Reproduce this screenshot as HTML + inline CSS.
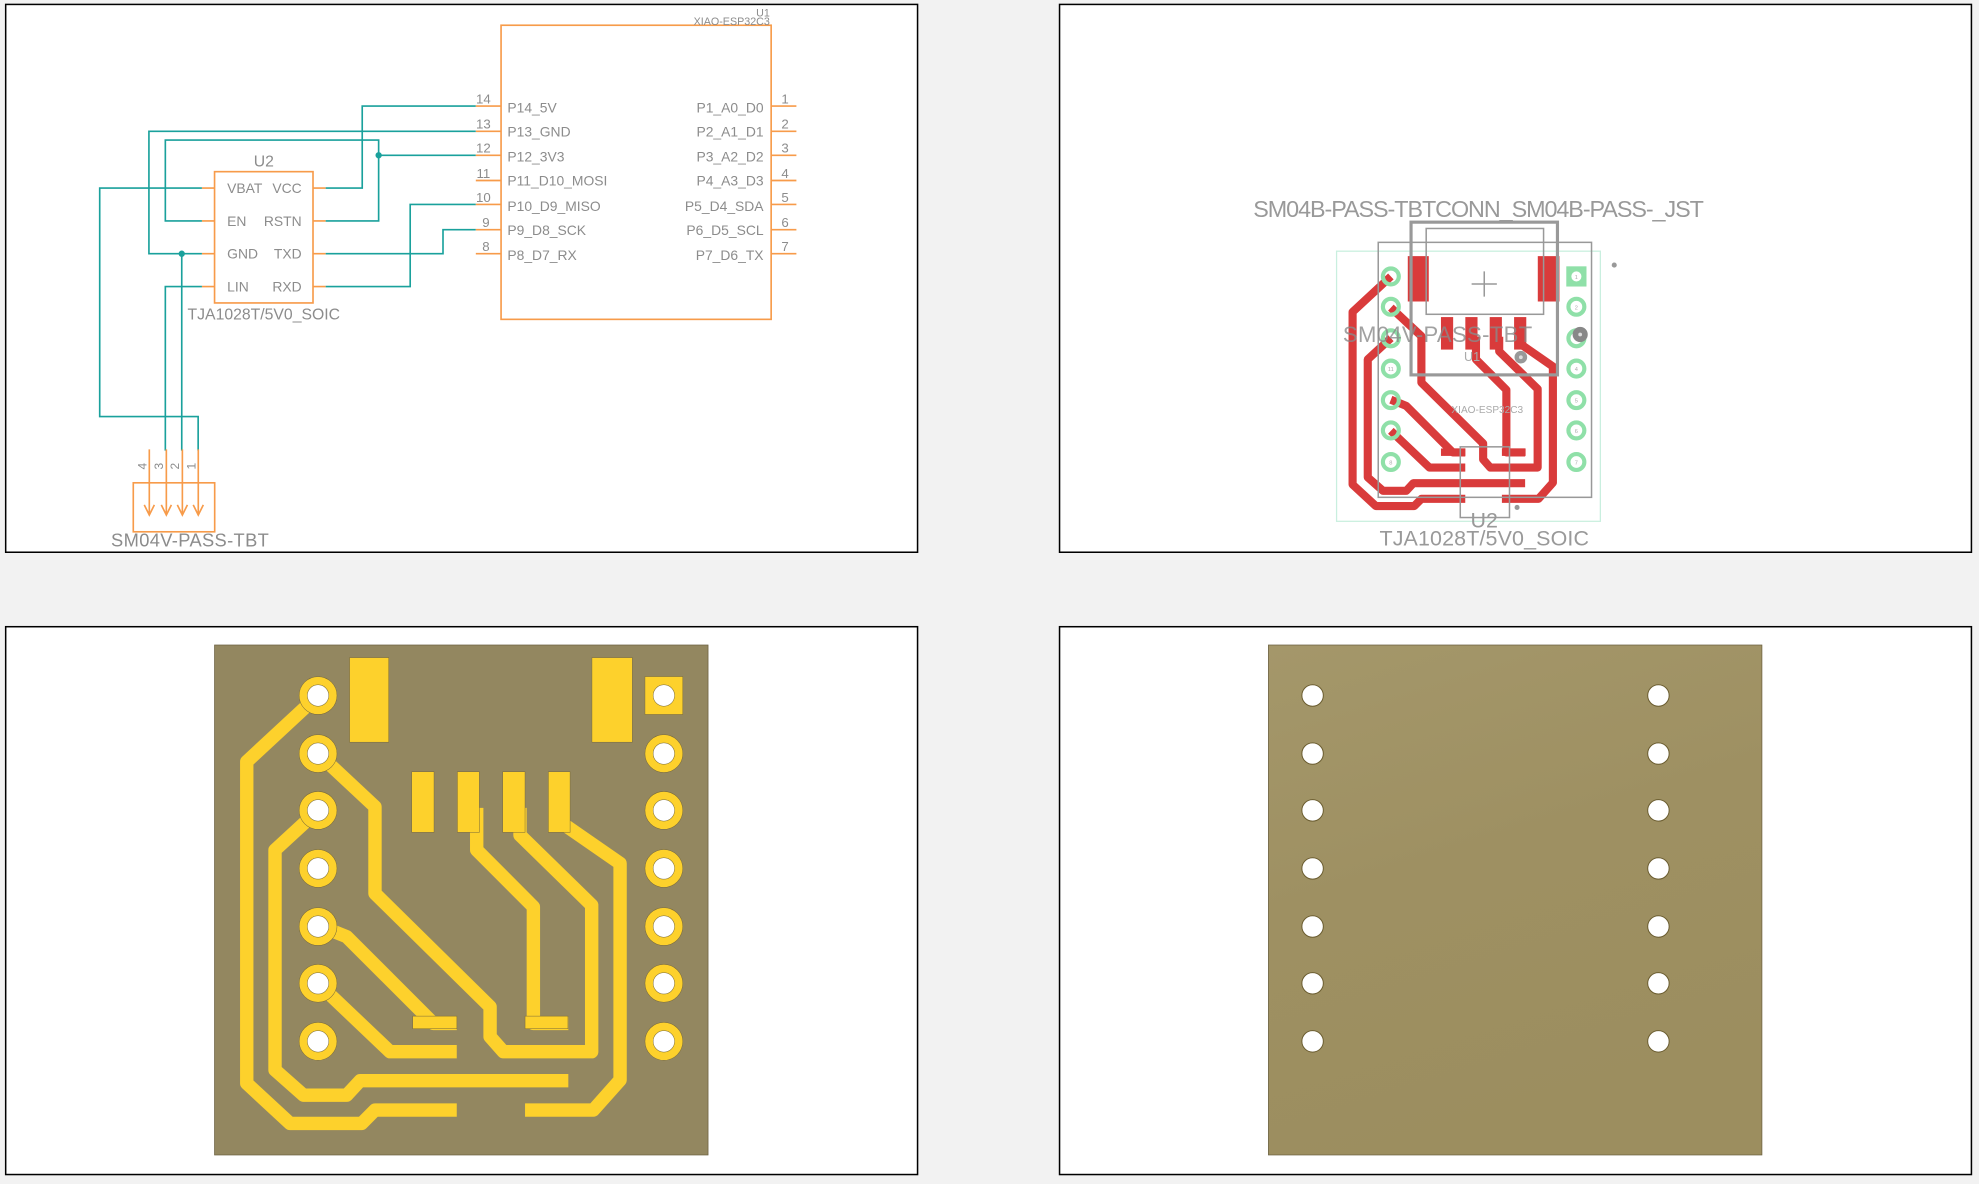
<!DOCTYPE html>
<html><head><meta charset="utf-8"><style>
html,body{margin:0;padding:0;background:#f2f2f2;}
svg{display:block;}
text{font-family:"Liberation Sans",sans-serif;}
</style></head><body>
<svg width="1979" height="1184" viewBox="0 0 1568 938" preserveAspectRatio="none" xmlns="http://www.w3.org/2000/svg">
<defs>
<linearGradient id="bg2" x1="0" y1="0" x2="0.3" y2="1">
<stop offset="0" stop-color="#a4976a"/><stop offset="0.5" stop-color="#9e9062"/><stop offset="1" stop-color="#9c8e5f"/>
</linearGradient>
<g id="traces" fill="none" stroke-linejoin="round" stroke-linecap="butt">
<path d="M252,551 L195.5,603.4 L195.5,858.3 L229.8,890 L286.6,890 L297.1,879.4 L361.9,879.4"/>
<path d="M252,597 L297.1,639.1 L297.1,707.8 L388.3,797.6 L388.3,821.3 L398.8,833.2 L468.8,833.2 L468.8,717.1 L412,661.6 L412,640"/>
<path d="M252,642 L217.9,673.4 L217.9,847.7 L240.4,867.6 L274.7,867.6 L285.3,856.2 L450.3,856.2"/>
<path d="M252,733 L274.7,742.1 L343.4,810.8 L361.9,810.8"/>
<path d="M252,779 L309,833.2 L361.9,833.2"/>
<path d="M377.7,640 L377.7,673.4 L422.6,718.4 L422.6,810.8 L450.3,810.8"/>
<path d="M443.7,651 L491.3,684 L491.3,855.6 L470.1,879.4 L416,879.4"/>
</g>
</defs>
<rect width="1568" height="938" fill="#f2f2f2"/>
<rect x="4.5" y="3.5" width="722.5" height="434" fill="#fff" stroke="#000" stroke-width="1.2"/>
<rect x="839.5" y="3.5" width="722.5" height="434" fill="#fff" stroke="#000" stroke-width="1.2"/>
<rect x="4.5" y="496.5" width="722.5" height="434" fill="#fff" stroke="#000" stroke-width="1.2"/>
<rect x="839.5" y="496.5" width="722.5" height="434" fill="#fff" stroke="#000" stroke-width="1.2"/>

<g fill="none" stroke="#1aa19c" stroke-width="1.3">
<path d="M258,149 H287 V84 H377"/>
<path d="M377,104 H118 V201 H160"/>
<path d="M377,123 H300 V111 H131 V175 H160"/>
<path d="M300,123 V175 H258"/>
<path d="M258,201 H351 V182 H377"/>
<path d="M258,227 H325 V162 H377"/>
<path d="M160,149 H79 V330 H157 V357"/>
<path d="M144,201 V357"/>
<path d="M160,227 H131 V357"/>
</g>
<circle cx="300" cy="123" r="2.5" fill="#1aa19c"/>
<circle cx="144" cy="201" r="2.5" fill="#1aa19c"/>
<g fill="none" stroke="#f79b4a" stroke-width="1.3">
<rect x="397" y="20" width="214" height="233"/>
<rect x="170" y="136" width="78" height="104"/>
<path d="M377,84H397M377,104H397M377,123H397M377,143H397M377,162H397M377,182H397M377,201H397"/>
<path d="M611,84H631M611,104H631M611,123H631M611,143H631M611,162H631M611,182H631M611,201H631"/>
<path d="M160,149H170M160,175H170M160,201H170M160,227H170M248,149H258M248,175H258M248,201H258M248,227H258"/>
<rect x="105.6" y="382.5" width="64.5" height="38.8"/>
<path d="M118.3,356V408M131.8,356V408M144.5,356V408M157.1,356V408"/>
<path d="M114.3,400L118.3,408L122.3,400M127.8,400L131.8,408L135.8,400M140.5,400L144.5,408L148.5,400M153.1,400L157.1,408L161.1,400"/>
</g>
<g fill="#8c8c8c" font-size="10.5">
<text x="383" y="82" text-anchor="middle">14</text><text x="383" y="102" text-anchor="middle">13</text><text x="383" y="121" text-anchor="middle">12</text><text x="383" y="141" text-anchor="middle">11</text><text x="383" y="160" text-anchor="middle">10</text><text x="385" y="180" text-anchor="middle">9</text><text x="385" y="199" text-anchor="middle">8</text>
<text x="622" y="82" text-anchor="middle">1</text><text x="622" y="102" text-anchor="middle">2</text><text x="622" y="121" text-anchor="middle">3</text><text x="622" y="141" text-anchor="middle">4</text><text x="622" y="160" text-anchor="middle">5</text><text x="622" y="180" text-anchor="middle">6</text><text x="622" y="199" text-anchor="middle">7</text>
</g>
<g fill="#8c8c8c" font-size="11">
<text x="402" y="89">P14_5V</text><text x="402" y="108">P13_GND</text><text x="402" y="128">P12_3V3</text><text x="402" y="147">P11_D10_MOSI</text><text x="402" y="167">P10_D9_MISO</text><text x="402" y="186">P9_D8_SCK</text><text x="402" y="206">P8_D7_RX</text>
<g text-anchor="end"><text x="605" y="89">P1_A0_D0</text><text x="605" y="108">P2_A1_D1</text><text x="605" y="128">P3_A2_D2</text><text x="605" y="147">P4_A3_D3</text><text x="605" y="167">P5_D4_SDA</text><text x="605" y="186">P6_D5_SCL</text><text x="605" y="206">P7_D6_TX</text></g>
<text x="180" y="153">VBAT</text><text x="180" y="179">EN</text><text x="180" y="205">GND</text><text x="180" y="231">LIN</text>
<g text-anchor="end"><text x="239" y="153">VCC</text><text x="239" y="179">RSTN</text><text x="239" y="205">TXD</text><text x="239" y="231">RXD</text></g>
</g>
<text x="209" y="132" fill="#8c8c8c" font-size="12.5" text-anchor="middle">U2</text>
<text x="209" y="253" fill="#8c8c8c" font-size="12.5" text-anchor="middle">TJA1028T/5V0_SOIC</text>
<text x="610" y="13" fill="#8c8c8c" font-size="8.5" text-anchor="end">U1</text>
<text x="610" y="20" fill="#8c8c8c" font-size="8.5" text-anchor="end">XIAO-ESP32C3</text>
<text x="88" y="433" fill="#8c8c8c" font-size="14.5" textLength="125">SM04V-PASS-TBT</text>
<g fill="#8c8c8c" font-size="9.5">
<text transform="translate(116,372) rotate(-90)">4</text><text transform="translate(129,372) rotate(-90)">3</text><text transform="translate(142,372) rotate(-90)">2</text><text transform="translate(155,372) rotate(-90)">1</text>
</g>

<rect x="1059" y="199" width="209" height="214" fill="none" stroke="#c9efdf" stroke-width="1"/>
<g transform="translate(966.8,-76.6) scale(0.5365)">
<use href="#traces" stroke="#d93b3b" stroke-width="12"/>
<g fill="#d93b3b">
<rect x="277" y="521" width="31" height="67"/><rect x="469" y="521" width="32" height="67"/>
<rect x="326" y="611" width="18" height="48"/><rect x="362" y="611" width="18" height="48"/><rect x="398" y="611" width="18" height="48"/><rect x="434" y="611" width="18" height="48"/>
<rect x="326" y="805" width="36" height="11"/><rect x="416" y="805" width="35" height="11"/>
</g>
</g>
<g fill="none" stroke="#8fe0a8" stroke-width="3.3">
<circle cx="1102" cy="219" r="6.3"/><circle cx="1102" cy="243" r="6.3"/><circle cx="1102" cy="268" r="6.3"/><circle cx="1102" cy="292" r="6.3"/><circle cx="1102" cy="317" r="6.3"/><circle cx="1102" cy="341" r="6.3"/><circle cx="1102" cy="366" r="6.3"/>
<circle cx="1249" cy="243" r="6.3"/><circle cx="1249" cy="268" r="6.3"/><circle cx="1249" cy="292" r="6.3"/><circle cx="1249" cy="317" r="6.3"/><circle cx="1249" cy="341" r="6.3"/><circle cx="1249" cy="366" r="6.3"/>
</g>
<rect x="1241" y="211" width="16" height="16" fill="#8fe0a8"/>
<circle cx="1249" cy="219" r="4" fill="#fff"/>
<g fill="#aaa" font-size="4.5" text-anchor="middle">
<text x="1249" y="221">1</text><text x="1249" y="245">2</text><text x="1249" y="294">4</text><text x="1249" y="319">5</text><text x="1249" y="343">6</text><text x="1249" y="368">7</text><text x="1102" y="294">11</text><text x="1102" y="368">8</text>
</g>
<g fill="none" stroke="#999" stroke-width="1.2">
<rect x="1092" y="192" width="169" height="202"/>
<rect x="1130" y="181" width="93" height="68"/>
<rect x="1157" y="354" width="39" height="56"/>
<path d="M1166,225H1186M1176,215V235"/>
</g>
<rect x="1118" y="176" width="116" height="121" fill="none" stroke="#999" stroke-width="2.5"/>
<circle cx="1252" cy="265" r="6" fill="#888"/><circle cx="1252" cy="265" r="1.5" fill="#ddd"/>
<circle cx="1205" cy="283" r="5" fill="#999"/><circle cx="1205" cy="283" r="1.5" fill="#ddd"/>
<circle cx="1279" cy="210" r="2" fill="#999"/><circle cx="1202" cy="402" r="2" fill="#999"/>
<text x="993" y="172" fill="#999" font-size="18.5" textLength="357">SM04B-PASS-TBTCONN_SM04B-PASS-_JST</text>
<text x="1064" y="271" fill="#8a8a8a" fill-opacity="0.8" font-size="17.5" textLength="150">SM04V-PASS-TBT</text>
<text x="1160" y="286" fill="#aaa" font-size="10">U1</text>
<text x="1150" y="327" fill="#aaa" font-size="8">XIAO-ESP32C3</text>
<text x="1176" y="418" fill="#999" font-size="17" text-anchor="middle">U2</text>
<text x="1093" y="432" fill="#999" font-size="17" textLength="166">TJA1028T/5V0_SOIC</text>

<rect x="170" y="511" width="391" height="404" fill="#938760" stroke="#6b6040" stroke-width="0.6"/>
<use href="#traces" stroke="#fdd12c" stroke-width="10.6"/>
<g fill="#fdd12c" stroke="#7a6b3a" stroke-width="0.4">
<rect x="277" y="521" width="31" height="67"/><rect x="469" y="521" width="32" height="67"/>
<rect x="326.2" y="611.4" width="17.7" height="48"/><rect x="362.4" y="611.4" width="17.4" height="48"/><rect x="398.3" y="611.4" width="17.7" height="48"/><rect x="434.5" y="611.4" width="17.2" height="48"/>
<rect x="327" y="805" width="35" height="10"/><rect x="416" y="805" width="34" height="10"/>
<rect x="511" y="536" width="30" height="30"/>
<circle cx="252" cy="551" r="15"/><circle cx="252" cy="597" r="15"/><circle cx="252" cy="642" r="15"/><circle cx="252" cy="688" r="15"/><circle cx="252" cy="734" r="15"/><circle cx="252" cy="779" r="15"/><circle cx="252" cy="825" r="15"/>
<circle cx="526" cy="597" r="15"/><circle cx="526" cy="642" r="15"/><circle cx="526" cy="688" r="15"/><circle cx="526" cy="734" r="15"/><circle cx="526" cy="779" r="15"/><circle cx="526" cy="825" r="15"/>
</g>
<g fill="#fff" stroke="#7a6b3a" stroke-width="0.4">
<circle cx="252" cy="551" r="8.5"/><circle cx="252" cy="597" r="8.5"/><circle cx="252" cy="642" r="8.5"/><circle cx="252" cy="688" r="8.5"/><circle cx="252" cy="734" r="8.5"/><circle cx="252" cy="779" r="8.5"/><circle cx="252" cy="825" r="8.5"/>
<circle cx="526" cy="551" r="8.5"/><circle cx="526" cy="597" r="8.5"/><circle cx="526" cy="642" r="8.5"/><circle cx="526" cy="688" r="8.5"/><circle cx="526" cy="734" r="8.5"/><circle cx="526" cy="779" r="8.5"/><circle cx="526" cy="825" r="8.5"/>
</g>

<rect x="1005" y="511" width="391" height="404" fill="url(#bg2)" stroke="#6b6040" stroke-width="0.6"/>
<g fill="#fff" stroke="#6b5d30" stroke-width="0.8">
<circle cx="1040" cy="551" r="8.5"/><circle cx="1040" cy="597" r="8.5"/><circle cx="1040" cy="642" r="8.5"/><circle cx="1040" cy="688" r="8.5"/><circle cx="1040" cy="734" r="8.5"/><circle cx="1040" cy="779" r="8.5"/><circle cx="1040" cy="825" r="8.5"/>
<circle cx="1314" cy="551" r="8.5"/><circle cx="1314" cy="597" r="8.5"/><circle cx="1314" cy="642" r="8.5"/><circle cx="1314" cy="688" r="8.5"/><circle cx="1314" cy="734" r="8.5"/><circle cx="1314" cy="779" r="8.5"/><circle cx="1314" cy="825" r="8.5"/>
</g>
</svg>
</body></html>
